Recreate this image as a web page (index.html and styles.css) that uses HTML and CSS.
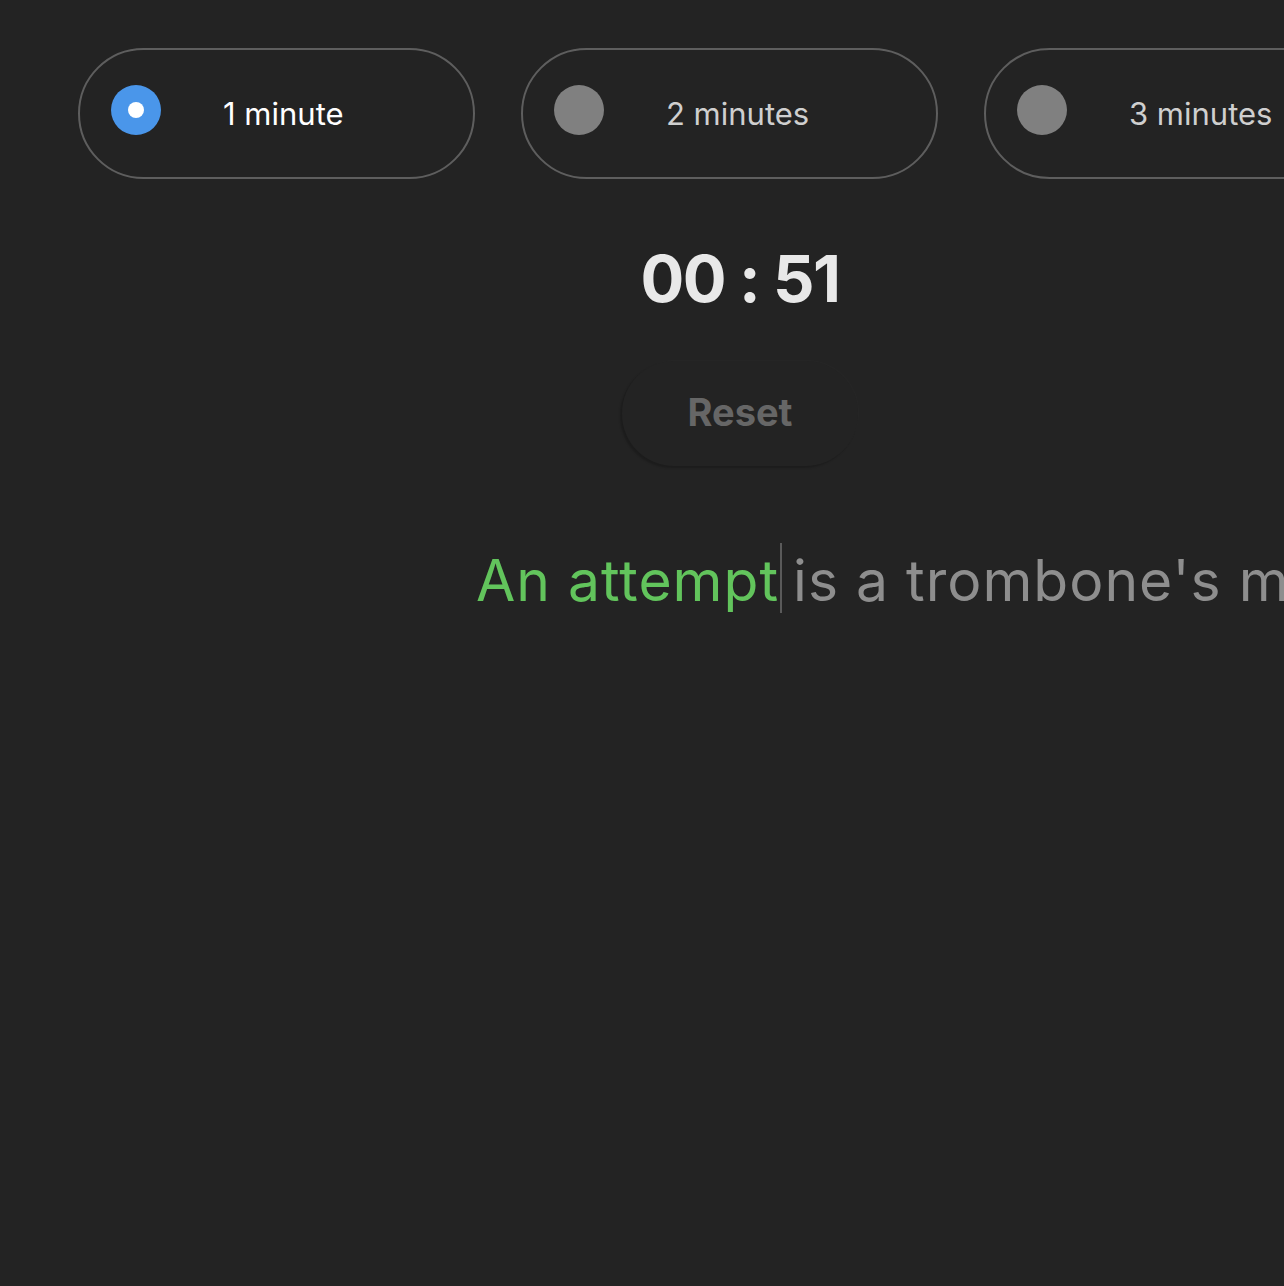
FILE: index.html
```html
<!DOCTYPE html>
<html lang="en">
<head>
<meta charset="utf-8">
<title>Typing test</title>
<link rel="stylesheet" href="styles.css">
</head>
<body>
<div class="page">
  <div class="options">
    <label class="pill pill-short">
      <span class="radio radio-on"><span class="dot"></span></span>
      <span class="pill-label active">1 minute</span>
    </label>
    <label class="pill">
      <span class="radio"></span>
      <span class="pill-label">2 minutes</span>
    </label>
    <label class="pill">
      <span class="radio"></span>
      <span class="pill-label">3 minutes</span>
    </label>
  </div>
  <div class="timer">00 : 51</div>
  <button class="reset">Reset</button>
  <div class="typing">
    <span class="typed">An attempt</span><span class="caret"></span><span class="rest">is a trombone's mass of sound</span>
  </div>
</div>
</body>
</html>
```

FILE: styles.css
```css
html, body {
  margin: 0;
  padding: 0;
  background: #232323;
  overflow: hidden;
}
body {
  font-family: Inter, "Noto Sans", sans-serif;
  color: #e8e8e8;
}
.page {
  width: 1480px;
  display: flex;
  flex-direction: column;
  align-items: center;
}
.options {
  display: flex;
  gap: 46px;
  padding-top: 48px;
  align-self: flex-start;
  margin-left: 78px;
}
.pill {
  box-sizing: border-box;
  width: 417px;
  height: 131px;
  border: 2px solid #5e5e5e;
  border-radius: 66px;
  display: flex;
  align-items: center;
  padding-left: 31px;
}
.pill-short {
  width: 397px;
}
.radio {
  width: 50px;
  height: 50px;
  border-radius: 50%;
  background: #808080;
  margin-right: 62px;
  margin-top: -8px;
  display: flex;
  align-items: center;
  justify-content: center;
  flex-shrink: 0;
}
.radio-on {
  background: #4a96ea;
}
.dot {
  width: 16px;
  height: 16px;
  border-radius: 50%;
  background: #ffffff;
}
.pill-label {
  font-size: 31px;
  color: #cfcfcf;
  white-space: nowrap;
}
.pill-label.active {
  color: #ffffff;
}
.timer {
  margin-top: 67px;
  font-size: 65px;
  font-weight: 700;
  color: #e8e8e8;
  line-height: 1;
  letter-spacing: -1.5px;
}
.reset {
  margin-top: 50px;
  width: 236px;
  height: 105px;
  border: none;
  border-radius: 52px;
  background: #232323;
  box-shadow: -2px 2px 2px rgba(0, 0, 0, 0.2), 1px -1px 1px rgba(255, 255, 255, 0.015);
  font-family: Inter, "Noto Sans", sans-serif;
  font-weight: 700;
  font-size: 38px;
  color: #666666;
  padding: 0 0 4px 0;
}
.typing {
  margin-top: 77px;
  align-self: flex-start;
  margin-left: 476px;
  display: flex;
  align-items: center;
  white-space: nowrap;
  font-size: 57px;
  letter-spacing: 1px;
  line-height: 1;
}
.typed {
  color: #62c45c;
  margin-top: 4px;
}
.rest {
  color: #8e8e8e;
  margin-top: 4px;
}
.caret {
  display: inline-block;
  width: 2px;
  height: 70px;
  background: #5a5a5a;
  margin: 0 11px 0 1px;
}
```
